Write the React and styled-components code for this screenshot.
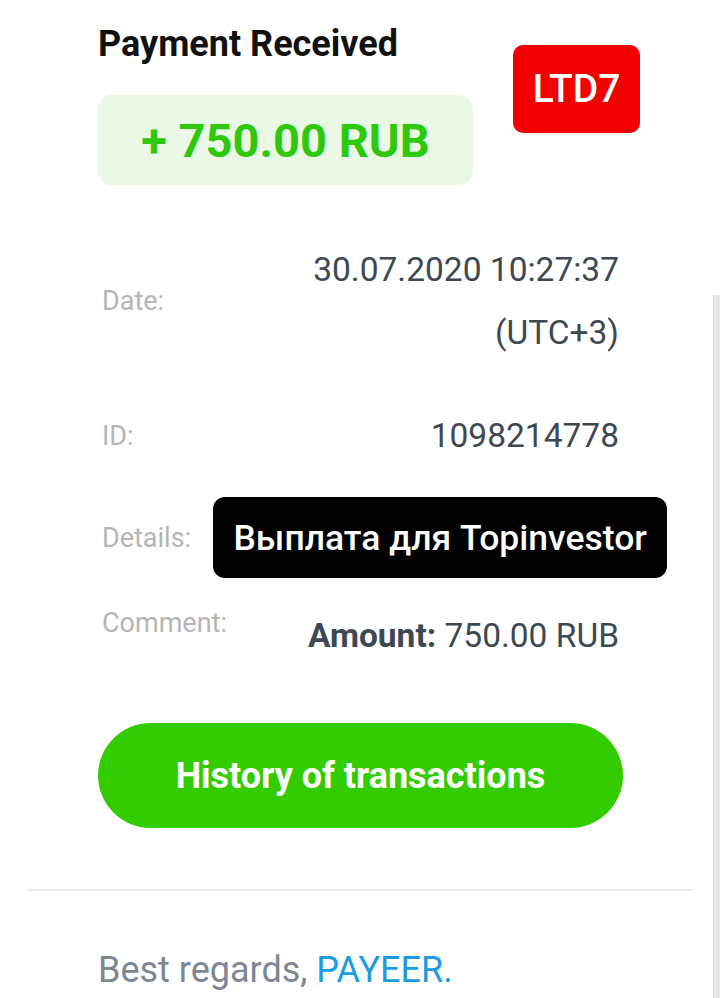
import React from "react";
import styled, { createGlobalStyle } from "styled-components";

const Global = createGlobalStyle`
  html, body { margin: 0; padding: 0; background: #ffffff; }
  body { font-family: Roboto, "Noto Sans", "Liberation Sans", sans-serif; }
  * { box-sizing: border-box; }
`;

const Page = styled.div`
  display: flex;
  width: 720px;
  min-height: 998px;
  overflow: hidden;
  background: #fff;
`;

const Main = styled.div`
  flex: 1;
  min-width: 0;
  display: flex;
  flex-direction: column;
`;

const ScrollStrip = styled.div`
  flex: 0 0 7px;
  width: 7px;
  margin-top: 295px;
  background: #e5e7e7;
  border-left: 1px solid #d9dcdc;
`;

const Content = styled.div`
  padding: 24px 94px 0 98px;
  display: flex;
  flex-direction: column;
`;

const Header = styled.div`
  display: flex;
  justify-content: space-between;
  align-items: flex-start;
`;

const HeaderLeft = styled.div`
  display: flex;
  flex-direction: column;
`;

const Title = styled.h1`
  margin: 0;
  font-size: 36px;
  line-height: 40px;
  font-weight: 700;
  color: #111;
`;

const AmountBox = styled.div`
  margin-top: 31px;
  width: 375px;
  height: 90px;
  border-radius: 14px;
  background: #eaf9e6;
  display: flex;
  align-items: center;
  justify-content: center;
  font-size: 47px;
  font-weight: 700;
  color: #2ec80f;
`;

const Badge = styled.div`
  flex-shrink: 0;
  margin-top: 21px;
  margin-right: -21px;
  width: 127px;
  height: 88px;
  border-radius: 10px;
  background: #f20000;
  color: #fff;
  display: flex;
  align-items: center;
  justify-content: center;
  font-size: 39px;
  font-weight: 500;
`;

const Row = styled.div`
  display: flex;
  justify-content: space-between;
  align-items: ${(p) => p.$align || "center"};
  margin-top: ${(p) => p.$top}px;
  gap: 22px;
`;

const Label = styled.div`
  font-size: 27px;
  line-height: 30px;
  color: #b5b5b5;
  padding-left: 4px;
  margin-top: ${(p) => p.$offset || 0}px;
  flex-shrink: 0;
`;

const Value = styled.div`
  font-size: 33.5px;
  line-height: ${(p) => p.$lh || 63}px;
  color: #3d4852;
  text-align: right;
  margin-top: ${(p) => p.$offset || 0}px;
`;

const Strong = styled.span`
  font-weight: 700;
`;

const DetailsBox = styled.div`
  flex-shrink: 0;
  width: 454px;
  height: 81px;
  margin-right: -48px;
  border-radius: 12px;
  background: #000;
  color: #fff;
  display: flex;
  align-items: center;
  justify-content: center;
  font-size: 35.5px;
  font-weight: 500;
  white-space: nowrap;
`;

const HistoryButton = styled.button`
  margin-top: 67px;
  width: 525px;
  height: 105px;
  border: none;
  border-radius: 53px;
  background: #33cc00;
  color: #fff;
  font-family: inherit;
  font-size: 36px;
  font-weight: 700;
  cursor: pointer;
`;

const Divider = styled.hr`
  margin: 61px 20px 0 28px;
  border: none;
  height: 2px;
  background: #ebebeb;
`;

const Footer = styled.p`
  margin: 59px 0 0 98px;
  font-size: 36px;
  line-height: 40px;
  color: #7d8794;
`;

const Brand = styled.span`
  color: #1b9be0;
`;

export default function App() {
  return (
    <>
      <Global />
      <Page>
        <Main>
          <Content>
            <Header>
              <HeaderLeft>
                <Title>Payment Received</Title>
                <AmountBox>+ 750.00 RUB</AmountBox>
              </HeaderLeft>
              <Badge>LTD7</Badge>
            </Header>

            <Row $top={53}>
              <Label>Date:</Label>
              <Value>
                30.07.2020 10:27:37
                <br />
                (UTC+3)
              </Value>
            </Row>

            <Row $top={40}>
              <Label>ID:</Label>
              <Value>1098214778</Value>
            </Row>

            <Row $top={30}>
              <Label>Details:</Label>
              <DetailsBox>Выплата для Topinvestor</DetailsBox>
            </Row>

            <Row $top={30} $align="flex-start">
              <Label>Comment:</Label>
              <Value $lh={40} $offset={8}>
                <Strong>Amount:</Strong> 750.00 RUB
              </Value>
            </Row>

            <HistoryButton>History of transactions</HistoryButton>
          </Content>

          <Divider />

          <Footer>
            Best regards, <Brand>PAYEER.</Brand>
          </Footer>
        </Main>
        <ScrollStrip />
      </Page>
    </>
  );
}
